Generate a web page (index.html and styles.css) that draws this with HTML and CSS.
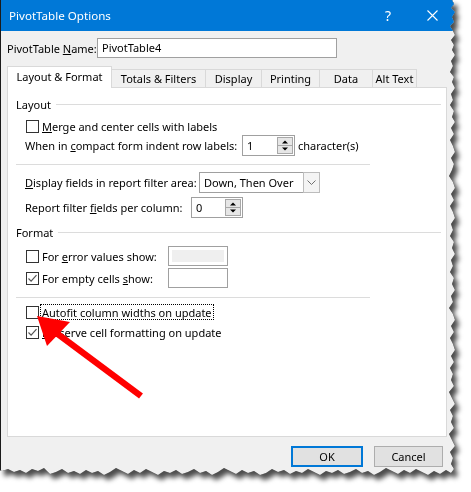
FILE: index.html
```html
<!DOCTYPE html>
<html>
<head>
<meta charset="utf-8">
<title>PivotTable Options</title>
<link rel="stylesheet" href="styles.css">
</head>
<body>
<div class="stage">
  <div class="frame">
    <div class="dialog">
      <div class="titlebar">
        <span class="title">PivotTable Options</span>
        <span class="help">?</span>
        <svg class="close" width="11" height="11" viewBox="0 0 11 11"><path d="M0.5 0.5L10.5 10.5M10.5 0.5L0.5 10.5" stroke="#fff" stroke-width="1.1" fill="none"/></svg>
      </div>
      <div class="content">
        <div class="name-row">
          <span class="name-label">PivotTable <u>N</u>ame:</span>
          <div class="textbox name-box">PivotTable4</div>
        </div>
        <div class="tabs">
          <div class="tab active t1">Layout &amp; Format</div>
          <div class="tab t2">Totals &amp; Filters</div>
          <div class="tab t3">Display</div>
          <div class="tab t4">Printing</div>
          <div class="tab t5">Data</div>
          <div class="tab t6">Alt Text</div>
        </div>
        <div class="panel">
          <div class="group"><span>Layout</span><i class="rule"></i></div>
          <div class="row r-merge"><span class="cb"></span><span class="lbl"><u>M</u>erge and center cells with labels</span></div>
          <div class="row r-compact">
            <span class="field-label w-compact">When in <u>c</u>ompact form indent row labels:</span>
            <div class="spin w-spin1"><span class="val">1</span>
              <svg class="spinbtn" width="16" height="17" viewBox="0 0 16 17"><rect x="0.5" y="0.5" width="15" height="16" fill="#e6e6e6" stroke="#a8a8a8"/><line x1="0" y1="8.5" x2="16" y2="8.5" stroke="#a8a8a8"/><path d="M5 6.5h6L8 3.5z" fill="#000"/><path d="M5 10.5h6L8 13.5z" fill="#000"/></svg>
            </div>
            <span class="unit">character(s)</span>
          </div>
          <div class="sep"></div>
          <div class="row r-display">
            <span class="field-label w-display"><u>D</u>isplay fields in report filter area:</span>
            <div class="combo">
              <span class="combo-text">Down, Then Over</span>
              <span class="combo-btn"><svg width="9" height="5" viewBox="0 0 9 5"><path d="M0.5 0.5l4 4 4-4" stroke="#707070" fill="none"/></svg></span>
            </div>
          </div>
          <div class="row r-report">
            <span class="field-label w-report">Report filter <u>f</u>ields per column:</span>
            <div class="spin w-spin2"><span class="val">0</span>
              <svg class="spinbtn" width="16" height="17" viewBox="0 0 16 17"><rect x="0.5" y="0.5" width="15" height="16" fill="#e6e6e6" stroke="#a8a8a8"/><line x1="0" y1="8.5" x2="16" y2="8.5" stroke="#a8a8a8"/><path d="M5 6.5h6L8 3.5z" fill="#000"/><path d="M5 10.5h6L8 13.5z" fill="#000"/></svg>
            </div>
          </div>
          <div class="group g-format"><span>Format</span><i class="rule"></i></div>
          <div class="row r-error">
            <span class="cb"></span><span class="lbl w-cbfield">For <u>e</u>rror values show:</span>
            <div class="inbox disabled"><i class="fill"></i></div>
          </div>
          <div class="row r-empty">
            <span class="cb"><svg width="11" height="11" viewBox="0 0 11 11"><path d="M1.5 5.5l2.6 2.6 5.4-6" fill="none" stroke="#555" stroke-width="1.2"/></svg></span><span class="lbl w-cbfield">For empty cells <u>s</u>how:</span>
            <div class="inbox"></div>
          </div>
          <div class="sep sep2"></div>
          <div class="row r-autofit"><span class="cb cb-tight"></span><span class="lbl focus"><u>A</u>utofit column widths on update</span></div>
          <div class="row r-preserve"><span class="cb"><svg width="11" height="11" viewBox="0 0 11 11"><path d="M1.5 5.5l2.6 2.6 5.4-6" fill="none" stroke="#555" stroke-width="1.2"/></svg></span><span class="lbl"><u>P</u>reserve cell formatting on update</span></div>
        </div>
        <div class="buttons">
          <div class="btn ok">OK</div>
          <div class="btn cancel">Cancel</div>
        </div>
      </div>
    </div>
  </div>
  <svg class="arrow" width="471" height="492" viewBox="0 0 471 492">
    <line x1="141" y1="396" x2="55" y2="332" stroke="#ff0000" stroke-width="6.5"/>
    <polygon points="37,316 70,322 47,346" fill="#ff0000"/>
  </svg>
</div>
</body>
</html>
```
FILE: styles.css
```css
* { box-sizing: border-box; }
html, body { margin: 0; padding: 0; background: #fff; }
body {
  font-family: "Noto Sans", "Segoe UI", sans-serif;
  font-size: 11px;
  color: #000;
  white-space: nowrap;
}
u { text-underline-offset: 1px; }

.stage { position: relative; width: 471px; height: 492px; overflow: hidden; }
.frame {
  width: 466px; height: 488px;
  filter: drop-shadow(0 0 0.6px rgba(0,0,0,0.95)) drop-shadow(4px 5px 2.5px rgba(0,0,0,0.7));
}
.dialog {
  width: 456px; height: 476px;
  background: #f0f0f0;
  border-left: 1px solid #1b1b1b;
  display: flex; flex-direction: column;
  clip-path: polygon(0 0, 452px 0, 454px 4px, 451px 8px, 455px 12px, 452px 17px, 454px 22px, 450px 26px, 453px 31px, 455px 35px, 451px 40px, 454px 45px, 452px 50px, 455px 55px, 451px 61px, 453px 66px, 450px 72px, 454px 77px, 452px 82px, 455px 88px, 451px 94px, 453px 100px, 450px 105px, 454px 111px, 452px 117px, 455px 122px, 451px 128px, 454px 134px, 450px 140px, 453px 146px, 455px 152px, 451px 158px, 454px 164px, 452px 170px, 449px 176px, 453px 182px, 455px 188px, 451px 194px, 454px 200px, 450px 206px, 453px 212px, 455px 218px, 451px 224px, 453px 230px, 450px 236px, 454px 242px, 452px 248px, 455px 254px, 451px 260px, 453px 266px, 450px 272px, 454px 278px, 452px 284px, 455px 290px, 451px 296px, 453px 302px, 449px 308px, 453px 314px, 455px 320px, 451px 326px, 454px 332px, 450px 338px, 453px 344px, 455px 350px, 451px 356px, 454px 362px, 450px 368px, 453px 374px, 451px 380px, 454px 386px, 449px 392px, 452px 398px, 455px 404px, 450px 410px, 453px 416px, 451px 422px, 454px 428px, 449px 434px, 452px 440px, 455px 446px, 450px 452px, 453px 458px, 451px 464px, 454px 469px, 451px 473px, 446px 470px, 440px 474px, 434px 471px, 428px 475px, 422px 472px, 416px 469px, 410px 473px, 404px 470px, 398px 474px, 392px 471px, 386px 468px, 380px 472px, 374px 475px, 368px 471px, 362px 473px, 356px 469px, 350px 472px, 344px 474px, 338px 470px, 332px 473px, 326px 471px, 320px 475px, 314px 472px, 308px 469px, 302px 473px, 296px 471px, 290px 474px, 284px 470px, 278px 472px, 272px 469px, 266px 473px, 260px 475px, 254px 471px, 248px 473px, 242px 470px, 236px 474px, 230px 471px, 224px 468px, 218px 472px, 212px 475px, 206px 471px, 200px 473px, 194px 469px, 188px 472px, 182px 474px, 176px 470px, 170px 473px, 164px 471px, 158px 475px, 152px 472px, 146px 469px, 140px 473px, 134px 470px, 128px 474px, 122px 471px, 116px 468px, 110px 472px, 104px 475px, 98px 471px, 92px 473px, 86px 470px, 80px 474px, 74px 471px, 68px 473px, 62px 469px, 56px 472px, 50px 474px, 44px 468px, 38px 471px, 32px 469px, 26px 473px, 20px 470px, 14px 472px, 8px 469px, 2px 471px, 0 470px);
}

.titlebar {
  flex: none;
  height: 31px;
  background: #0078d7;
  color: #fff;
  display: flex; align-items: center;
  padding-left: 8px;
}
.title { flex: 1; font-size: 11.6px; }
.help { font-size: 14px; margin-right: 36px; }
.close { margin-right: 18px; }

.content { flex: 1; padding: 7px 0 0 6px; display: flex; flex-direction: column; }

.name-row { display: flex; align-items: center; height: 20px; flex: none; }
.name-label { width: 90px; }
.textbox { border: 1px solid #a0a0a0; background: #fff; }
.name-box { width: 240px; height: 20px; padding-left: 4px; line-height: 18px; }

.tabs {
  flex: none;
  display: flex; align-items: flex-end;
  height: 21px; margin-top: 8px;
  position: relative; z-index: 1;
}
.tab {
  height: 18px;
  border: 1px solid #d9d9d9; border-bottom: none;
  margin-left: -1px;
  display: flex; align-items: center; justify-content: center;
  background: #f0f0f0;
}
.tab.active { height: 22px; background: #fff; margin-bottom: -1px; margin-left: 0; padding-bottom: 2px; }
.t1 { width: 105px; }
.t2 { width: 95px; }
.t3 { width: 57px; }
.t4 { width: 59px; }
.t5 { width: 54px; }
.t6 { width: 45px; }

.panel {
  flex: none;
  width: 440px; height: 350px;
  background: #fff;
  border: 1px solid #d9d9d9;
  padding: 8px 5px 0 8px;
  display: flex; flex-direction: column;
}
.group { display: flex; align-items: center; height: 16px; gap: 5px; flex: none; }
.group .rule { flex: 1; height: 1px; background: #dcdcdc; }
.g-format { margin-top: 6px; }

.row { display: flex; align-items: center; flex: none; padding-left: 10px; }
.cb {
  width: 13px; height: 13px;
  border: 1px solid #333;
  background: #fff;
  margin-right: 3px;
  display: flex; align-items: center; justify-content: center;
  flex: none;
}
.cb-tight { margin-right: 1px; }
.field-label { flex: none; }

.r-merge { height: 16px; margin-top: 6px; }
.r-compact { height: 21px; margin-top: 1px; padding-left: 9px; }
.sep { flex: none; height: 1px; width: 354px; background: #dcdcdc; margin-top: 8px; }
.r-display { height: 21px; margin-top: 7px; padding-left: 9px; }
.r-report { height: 21px; margin-top: 4px; padding-left: 9px; }
.r-error { height: 20px; margin-top: 6px; }
.r-empty { height: 20px; margin-top: 2px; }
.sep2 { margin-top: 9px; }
.r-autofit { height: 16px; margin-top: 6px; }
.r-preserve { height: 16px; margin-top: 4px; }

.w-compact { width: 217px; }
.w-display { width: 174px; }
.w-report { width: 166px; }
.w-cbfield { width: 126px; }

.spin {
  display: flex; align-items: center;
  height: 21px;
  border: 1px solid #a0a0a0; background: #fff;
  padding: 0 1px 0 4px;
}
.spin .val { flex: 1; }
.w-spin1 { width: 53px; }
.w-spin2 { width: 52px; }
.unit { margin-left: 3px; }

.combo { display: flex; width: 121px; height: 21px; }
.combo-text {
  flex: 1;
  border: 1px solid #a0a0a0; border-right: none;
  background: #fff;
  padding-left: 4px;
  display: flex; align-items: center;
}
.combo-btn {
  width: 17px;
  border: 1px solid #bcbcbc;
  background: #f4f4f4;
  display: flex; align-items: center; justify-content: center;
}

.inbox { width: 60px; height: 20px; border: 1px solid #a0a0a0; background: #fff; padding: 3px; }
.inbox .fill { display: block; width: 100%; height: 100%; background: #efefef; }

.focus { border: 1px dotted #000; padding: 0 1px; height: 16px; display: flex; align-items: center; }

.buttons { flex: none; display: flex; gap: 11px; margin-top: 9px; padding-left: 284px; }
.btn {
  height: 21px;
  background: #e1e1e1;
  border: 1px solid #adadad;
  display: flex; align-items: center; justify-content: center;
}
.btn.ok { width: 72px; border: 2px solid #0078d7; }
.btn.cancel { width: 69px; }

.arrow { position: absolute; left: 0; top: 0; pointer-events: none; }
```
